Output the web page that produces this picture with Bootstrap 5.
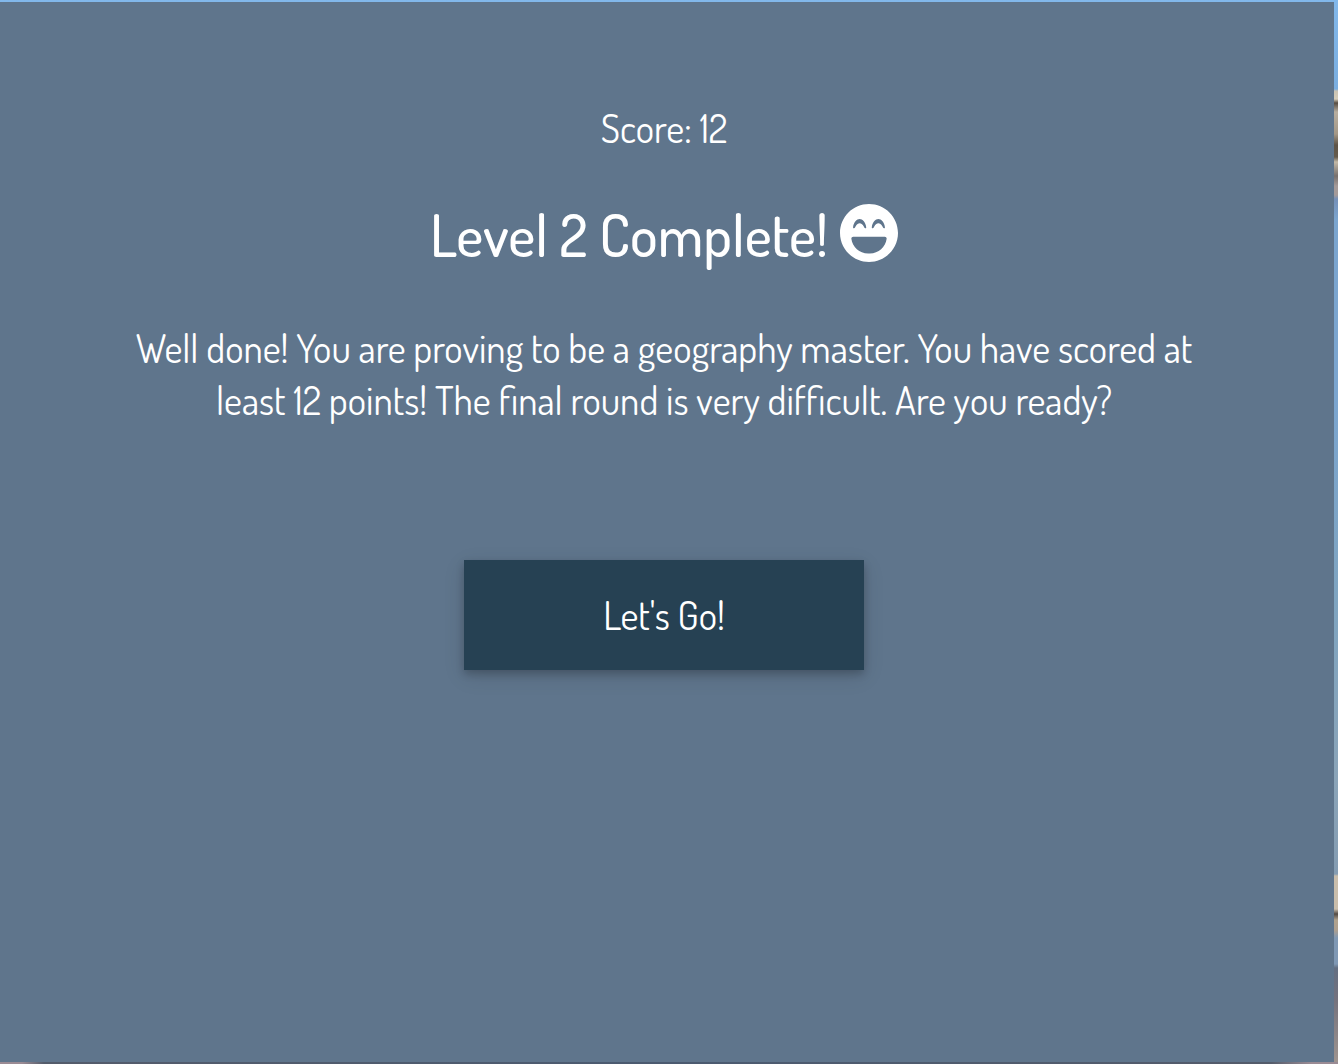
<!DOCTYPE html>
<html lang="en">
<head>
<meta charset="utf-8">
<meta name="viewport" content="width=device-width, initial-scale=1">
<title>Level 2 Complete!</title>
<link rel="stylesheet" href="https://cdn.jsdelivr.net/npm/bootstrap@5.3.0/dist/css/bootstrap.min.css">
<style>
  body {
    font-family: Dosis, Lato, "Open Sans", sans-serif;
    font-size: 39px;
    line-height: 52px;
    color: #fff;
    padding: 2px 4px 2px 0;
    /* sky and stone scene behind the panel */
    background:
      linear-gradient(90deg, #9a8b94 0, #9a8b94 22px, #545c6b 44px, #4b5a70 50%, #545c6b 95%, #9a8b94 98%) bottom / 100% 2px no-repeat,
      linear-gradient(#82b8eb 0, #7aaee0 89px, #c9c3b4 91px, #d5ccb8 99px, #554c43 103px, #b8ae9f 112px, #a39786 134px, #5e5447 145px, #655b4d 157px, #c3b9a7 162px, #77706d 176px, #a59a98 186px, #a59a98 195px, #7590b8 199px, #7ba5cf 220px, #7ba5cf 400px, #7fa4c0 600px, #8ba4b8 780px, #849cb2 874px, #c9bdab 876px, #c9bdab 909px, #514a45 914px, #b0a28d 920px, #ae9f8e 930px, #7f98b4 938px, #7f98b4 964px, #636f82 968px, #74727d 1000px, #a0958f 1064px);
  }
  .result-panel {
    background: #5f758c;
    min-height: calc(100vh - 4px);
    padding: 100px 102px 48px 96px;
  }
  .result-title { font-size: 58px; line-height: 72px; margin: 44px 0 52px; font-weight: 500; gap: 12px; }
  .result-title svg { width: 58px; height: 58px; flex: none; margin-bottom: 2px; }
  .result-text { max-width: 1080px; }
  .next-btn {
    width: 400px;
    max-width: 100%;
    height: 110px;
    margin-top: 134px;
    font-size: 39px;
    --bs-btn-color: #fff;
    --bs-btn-bg: #264153;
    --bs-btn-hover-color: #fff;
    --bs-btn-hover-bg: #1f3646;
    box-shadow: 0 4px 8px rgba(0, 0, 0, .2), 0 6px 20px rgba(0, 0, 0, .12);
  }
</style>
<script src="https://cdn.jsdelivr.net/npm/bootstrap@5.3.0/dist/js/bootstrap.bundle.min.js"></script>
</head>
<body>
<main class="result-panel d-flex flex-column align-items-center text-center">
  <p class="m-0">Score: 12</p>
  <h1 class="result-title d-flex align-items-center justify-content-center">
    <span>Level 2 Complete!</span>
    <svg viewBox="0 8 496 496" fill="currentColor" aria-hidden="true"><path d="M248 8C111 8 0 119 0 256s111 248 248 248 248-111 248-248S385 8 248 8zm24 199.400c3.300-42.100 32.200-71.400 56-71.400s52.700 29.300 56 71.400c.7 8.600-10.800 11.900-14.900 4.500l-9.500-17c-7.700-13.700-19.200-21.600-31.500-21.600s-23.800 7.900-31.500 21.600l-9.500 17c-4.200 7.400-15.800 4.100-15.100-4.500zm-160 0c3.300-42.100 32.200-71.400 56-71.400s52.700 29.300 56 71.400c.7 8.600-10.800 11.900-14.900 4.500l-9.500-17c-7.700-13.700-19.200-21.600-31.500-21.600s-23.800 7.900-31.500 21.600l-9.500 17c-4.300 7.400-15.800 4-15.100-4.500zM398.900 306C390 377 329.400 432 256 432h-16c-73.400 0-134-55-142.900-126-1.200-9.500 6.300-18 15.900-18h270c9.600 0 17.100 8.400 15.900 18z"/></svg>
  </h1>
  <p class="result-text m-0">Well done! You are proving to be a geography master. You have scored at least 12 points! The final round is very difficult. Are you ready?</p>
  <button type="button" class="btn next-btn rounded-0 border-0">Let's Go!</button>
</main>
</body>
</html>
